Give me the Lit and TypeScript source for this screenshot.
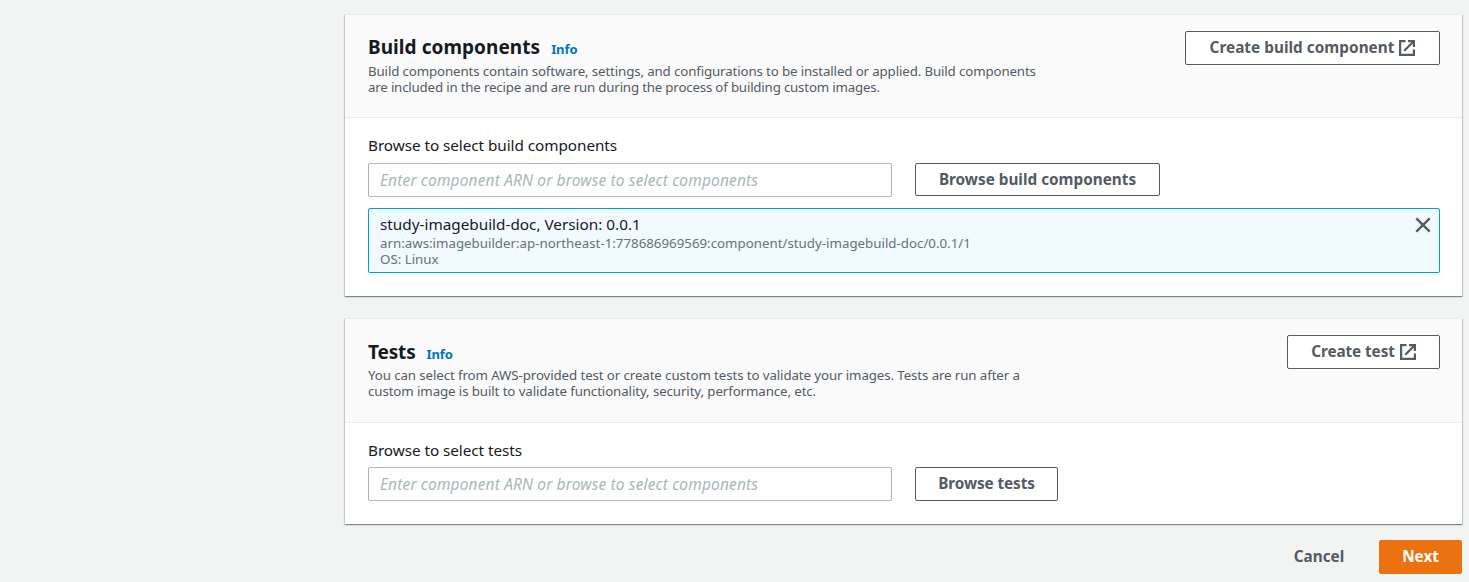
import { LitElement, html, css } from "lit";
import { customElement, property } from "lit/decorators.js";

const externalIcon = html`<svg class="ext" viewBox="0 0 16 16" width="16" height="16" fill="none" stroke="currentColor" stroke-width="2.2">
  <path d="M6.5 1.1H1.1v13.8h13.8V9.5" />
  <path d="M9 1.1h5.9V7" />
  <path d="M14.5 1.5L5.2 10.8" />
</svg>`;

const closeIcon = html`<svg viewBox="0 0 16 16" width="16" height="16" fill="none" stroke="currentColor" stroke-width="2.4">
  <path d="M1.3 1.3l13.4 13.4M14.7 1.3L1.3 14.7" />
</svg>`;

@customElement("ib-button")
export class IbButton extends LitElement {
  @property({ type: String, reflect: true }) variant = "normal";
  @property({ type: Boolean }) external = false;

  static styles = css`
    :host { display: inline-flex; flex: none; }
    button {
      font: 700 15.3px/20px "Noto Sans", sans-serif;
      letter-spacing: inherit;
      box-sizing: border-box;
      width: 100%;
      height: 100%;
      padding: 0 0 2px;
      display: flex;
      align-items: center;
      justify-content: center;
      gap: 5px;
      white-space: nowrap;
      color: #545b64;
      background: #fff;
      border: 1px solid #545b64;
      border-radius: 2px;
    }
    .ext { flex: none; display: block; margin-top: 2px; }
    .link { background: transparent; border-color: transparent; }
    .primary { color: #fff; background: #ec7211; border-color: #ec7211; }
  `;

  render() {
    return html`<button class=${this.variant}>
      <span class="label"><slot></slot></span>${this.external ? externalIcon : null}
    </button>`;
  }
}

@customElement("ib-panel")
export class IbPanel extends LitElement {
  @property() heading = "";

  static styles = css`
    :host {
      display: flex;
      flex-direction: column;
      box-sizing: border-box;
      background: #fff;
      border-top: 1px solid #eaeded;
      box-shadow: 0 1px 1px 0 rgba(0, 28, 36, 0.3), 1px 1px 1px 0 rgba(0, 28, 36, 0.15),
        -1px 1px 1px 0 rgba(0, 28, 36, 0.15);
    }
    header {
      box-sizing: border-box;
      height: var(--header-height, 103px);
      display: flex;
      justify-content: space-between;
      align-items: flex-start;
      padding: 16px 22px 0 23px;
      background: #fafafa;
      border-bottom: 1px solid #eaeded;
    }
    .title {
      display: flex;
      align-items: baseline;
      gap: 11px;
      height: 32px;
      padding-top: var(--title-offset, 3px);
      box-sizing: border-box;
    }
    h2 { margin: 0; font-size: 19px; line-height: 26px; font-weight: 700; color: #16191f; letter-spacing: var(--title-spacing, 0.06px); }
    a { font-size: 13px; font-weight: 700; color: #0073bb; letter-spacing: -0.1px; }
    .body { padding: 17px 22px 0 23px; }
  `;

  render() {
    return html`
      <header>
        <div>
          <div class="title"><h2>${this.heading}</h2><a>Info</a></div>
          <slot name="description"></slot>
        </div>
        <slot name="action"></slot>
      </header>
      <div class="body"><slot></slot></div>
    `;
  }
}

@customElement("app-root")
export class AppRoot extends LitElement {
  static styles = css`
    :host {
      display: block;
      box-sizing: border-box;
      height: 582px;
      overflow: hidden;
      padding: 14px 7px 0 345px;
      background: #f2f3f3;
      font-family: "Noto Sans", sans-serif;
      color: #16191f;
    }
    .components { height: 282px; }
    .tests { height: 206px; margin-top: 22px; --header-height: 104px; --title-offset: 4px; --title-spacing: -0.15px; }
    .desc { font-size: 13.3px; line-height: 16px; color: #545b64; white-space: nowrap; }
    .l1 { letter-spacing: -0.132px; }
    .l2 { letter-spacing: -0.19px; }
    .l3 { letter-spacing: -0.104px; }
    .field-label { font-size: 15.3px; line-height: 20px; letter-spacing: -0.06px; margin-bottom: 8px; }
    .tests .field-label { margin-bottom: 7px; }
    .row { display: flex; align-items: flex-start; gap: 23px; }
    input {
      box-sizing: border-box;
      width: 524px;
      height: 34px;
      margin: 0;
      padding: 0 11px 1px;
      border: 1px solid #aab7b8;
      border-radius: 2px;
      background: #fff;
      font: 15.5px "Noto Sans", sans-serif;
    }
    input::placeholder { color: #aab7b8; font-style: italic; letter-spacing: 0.14px; opacity: 1; }
    .create-component { width: 255px; height: 34px; letter-spacing: 0.04px; }
    .create-test { width: 153px; height: 34px; letter-spacing: -0.08px; }
    .browse-components { width: 245px; height: 33px; }
    .browse-tests { width: 143px; height: 34px; letter-spacing: -0.08px; }
    .token {
      box-sizing: border-box;
      display: flex;
      justify-content: space-between;
      height: 65px;
      margin-top: 11px;
      padding: 5px 8px 0 11px;
      background: #f1faff;
      border: 1px solid #00a1c9;
      border-radius: 2px;
    }
    .token-name { font-size: 15.3px; line-height: 20px; margin-bottom: 1px; }
    .token-meta { font-size: 13.3px; line-height: 16px; color: #687078; }
    .close { color: #545b64; margin-top: 3px; height: 16px; }
    .close svg { display: block; }
    .actions { display: flex; justify-content: flex-end; margin-top: 16px; }
    .cancel { width: 104px; height: 34px; margin-right: 8px; }
    .next { width: 83px; height: 34px; }
  `;

  render() {
    return html`
      <ib-panel class="components" heading="Build components">
        <div slot="description" class="desc">
          <div class="l1">Build components contain software, settings, and configurations to be installed or applied. Build components</div>
          <div class="l2">are included in the recipe and are run during the process of building custom images.</div>
        </div>
        <ib-button slot="action" class="create-component" external>Create build component</ib-button>
        <div class="field-label">Browse to select build components</div>
        <div class="row">
          <input placeholder="Enter component ARN or browse to select components" />
          <ib-button class="browse-components">Browse build components</ib-button>
        </div>
        <div class="token">
          <div>
            <div class="token-name">study-imagebuild-doc, Version: 0.0.1</div>
            <div class="token-meta">arn:aws:imagebuilder:ap-northeast-1:778686969569:component/study-imagebuild-doc/0.0.1/1</div>
            <div class="token-meta">OS: Linux</div>
          </div>
          <div class="close">${closeIcon}</div>
        </div>
      </ib-panel>
      <ib-panel class="tests" heading="Tests">
        <div slot="description" class="desc">
          <div class="l3">You can select from AWS-provided test or create custom tests to validate your images. Tests are run after a</div>
          <div class="l3">custom image is built to validate functionality, security, performance, etc.</div>
        </div>
        <ib-button slot="action" class="create-test" external>Create test</ib-button>
        <div class="field-label">Browse to select tests</div>
        <div class="row">
          <input placeholder="Enter component ARN or browse to select components" />
          <ib-button class="browse-tests">Browse tests</ib-button>
        </div>
      </ib-panel>
      <div class="actions">
        <ib-button class="cancel" variant="link">Cancel</ib-button>
        <ib-button class="next" variant="primary">Next</ib-button>
      </div>
    `;
  }
}
